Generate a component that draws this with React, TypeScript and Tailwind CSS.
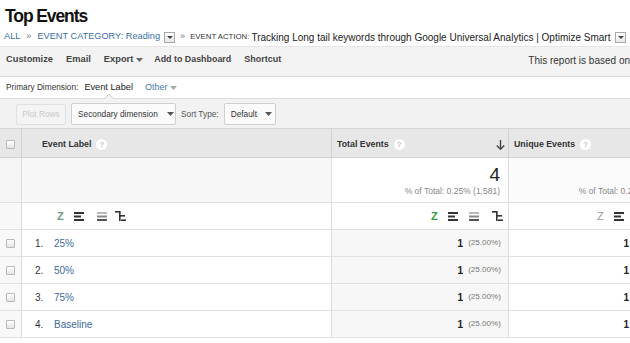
import React from "react";

const COLS = "grid grid-cols-[22px_310px_177px_165px] w-[674px]";

function Checkbox() {
  return (
    <div className="w-[9px] h-[9px] border border-[#b9b9b9] rounded-[1px] bg-gradient-to-b from-white to-[#e4e4e4]" />
  );
}

function Help() {
  return (
    <span className="inline-flex items-center justify-center w-[11px] h-[11px] rounded-full bg-white text-[#c4c4c4] text-[8px] font-bold leading-none">
      ?
    </span>
  );
}

function Caret({ color = "#555" }: { color?: string }) {
  return (
    <svg width="7" height="4" viewBox="0 0 7 4" className="inline-block">
      <path d="M0 0 L7 0 L3.5 4 Z" fill={color} />
    </svg>
  );
}

function SmallDrop() {
  return (
    <span className="inline-flex items-center justify-center w-[11px] h-[11px] border border-[#a9a9a9] bg-gradient-to-b from-white to-[#e8e8e8]">
      <svg width="6" height="3" viewBox="0 0 6 3">
        <path d="M0 0 L6 0 L3 3 Z" fill="#444" />
      </svg>
    </span>
  );
}

function IconZ({ cls }: { cls: string }) {
  return <span className={`text-[11px] leading-none w-[8px] ${cls}`}>Z</span>;
}

function IconE() {
  return (
    <svg width="10" height="9" viewBox="0 0 10 9">
      <rect x="0" y="0" width="10" height="2" fill="#333" />
      <rect x="0" y="3.5" width="7" height="2" fill="#333" />
      <rect x="0" y="7" width="10" height="2" fill="#333" />
    </svg>
  );
}

function IconBars() {
  return (
    <svg width="10" height="9" viewBox="0 0 10 9">
      <rect x="0" y="0" width="10" height="2" fill="#bbb" />
      <rect x="0" y="3.5" width="10" height="2" fill="#888" />
      <rect x="0" y="7" width="10" height="2" fill="#555" />
    </svg>
  );
}

function IconPivot() {
  return (
    <svg width="11" height="10" viewBox="0 0 11 10">
      <rect x="0" y="0" width="5" height="1.6" fill="#333" />
      <rect x="4" y="0" width="1.6" height="10" fill="#333" />
      <rect x="4" y="4" width="6" height="1.6" fill="#333" />
      <rect x="6" y="8.4" width="5" height="1.6" fill="#333" />
    </svg>
  );
}

function DownArrow() {
  return (
    <svg width="9" height="10" viewBox="0 0 9 10">
      <path d="M4.5 0 V9" stroke="#444" strokeWidth="1.4" />
      <path d="M0.8 5.5 L4.5 9.2 L8.2 5.5" stroke="#444" strokeWidth="1.4" fill="none" />
    </svg>
  );
}

function IconSet({ z }: { z: string }) {
  return (
    <>
      <IconZ cls={z} />
      <span className="ml-[9px] flex"><IconE /></span>
      <span className="ml-[11px] flex"><IconBars /></span>
      <span className="ml-[13px] flex"><IconPivot /></span>
    </>
  );
}

function TotalCell({ cls }: { cls: string }) {
  return (
    <div className={`${cls} flex flex-col items-end pt-[7px]`}>
      <span className="text-[19px] leading-[20px] text-[#222]">4</span>
      <span className="text-[8.5px] leading-[12px] text-[#888]">% of Total: 0.25% (1,581)</span>
    </div>
  );
}

const rows = [
  { n: "1.", label: "25%" },
  { n: "2.", label: "50%" },
  { n: "3.", label: "75%" },
  { n: "4.", label: "Baseline" },
];

export default function App() {
  return (
    <div className="w-[630px] h-[343px] overflow-hidden bg-white font-['Liberation_Sans',Arial,sans-serif] text-[#222]">
      {/* Title */}
      <div className="h-[28px] pl-[5px] pt-[6px]">
        <h1 className="text-[17.5px] leading-[20px] font-bold tracking-[-1.1px] text-[#111]">Top Events</h1>
      </div>

      {/* Breadcrumb */}
      <div className="h-[18px] pl-[4px] flex items-center text-[9.2px] whitespace-nowrap">
        <span className="text-[#3d6fa8]">ALL</span>
        <span className="text-[#777] mx-[6px]">»</span>
        <span className="text-[#3d6fa8]">EVENT CATEGORY: Reading</span>
        <span className="ml-[4px]"><SmallDrop /></span>
        <span className="text-[#777] mx-[5px]">»</span>
        <span className="text-[7.8px] text-[#333]">EVENT ACTION:</span>
        <span className="ml-[2px] text-[#222] text-[10px]">
          Tracking Long tail keywords through Google Universal Analytics | Optimize Smart
        </span>
        <span className="ml-[5px]"><SmallDrop /></span>
      </div>

      {/* Toolbar */}
      <div className="h-[30px] bg-[#f3f3f3] border-t border-[#e6e6e6] flex items-center pl-[6px] pb-[3px] text-[9.3px] font-bold text-[#444] whitespace-nowrap">
        <span>Customize</span>
        <span className="ml-[13px]">Email</span>
        <span className="ml-[13px] flex items-center gap-[3px]">Export <Caret color="#666" /></span>
        <span className="ml-[11px] text-[8.9px]">Add to Dashboard</span>
        <span className="ml-[13px] text-[9px]">Shortcut</span>
        <span className="ml-auto font-normal text-[10px] text-[#333]">This report is based on</span>
      </div>

      {/* Primary dimension */}
      <div className="h-[23px] border-t border-b border-[#dcdcdc] flex items-center pl-[6px] text-[8.3px] whitespace-nowrap">
        <span className="text-[#333]">Primary Dimension:</span>
        <span className="ml-[6px] text-[9.2px] text-[#222] relative">
          Event Label
          <svg width="10" height="5" viewBox="0 0 10 5" className="absolute left-[20px] top-[13px]">
            <path d="M0 5 L5 0 L10 5" fill="#f2f2f2" stroke="#cfcfcf" strokeWidth="1" />
          </svg>
        </span>
        <span className="ml-[12px] text-[9px] text-[#4a78ad] flex items-center gap-[3px]">
          Other <Caret color="#aaa" />
        </span>
      </div>

      {/* Controls */}
      <div className="h-[30px] bg-[#f2f2f2] border-b border-[#d4d4d4] flex items-center pl-[16px] pt-[1px] text-[8.3px] whitespace-nowrap">
        <div className="h-[21px] w-[50px] border border-[#e0e0e0] bg-[#f4f4f4] rounded-[2px] flex items-center justify-center text-[#c8c8c8]">
          Plot Rows
        </div>
        <div className="ml-[5px] h-[22px] w-[105px] border border-[#cfcfcf] bg-[#fbfbfb] rounded-[2px] flex items-center pl-[6px] text-[#333]">
          Secondary dimension
          <span className="ml-[9px] flex"><Caret color="#555" /></span>
        </div>
        <span className="ml-[5px] text-[#555]">Sort Type:</span>
        <div className="ml-[5px] h-[22px] w-[52px] border border-[#cfcfcf] bg-[#fbfbfb] rounded-[2px] flex items-center pl-[6px] text-[#333]">
          Default
          <span className="ml-[8px] flex"><Caret color="#555" /></span>
        </div>
      </div>

      {/* Table header */}
      <div className={`${COLS} h-[29px] bg-[#e7e7e7] border-b border-[#d2d2d2] text-[8.8px] font-bold text-[#333]`}>
        <div className="border-r border-[#d2d2d2] flex items-center justify-center pt-[2px]">
          <Checkbox />
        </div>
        <div className="border-r border-[#d2d2d2] flex items-center pl-[20px] pt-[3px] gap-[5px]">
          Event Label <Help />
        </div>
        <div className="border-r border-[#d2d2d2] flex items-center pl-[5px] pr-[3px] pt-[3px] gap-[5px]">
          Total Events <Help />
          <span className="ml-auto flex"><DownArrow /></span>
        </div>
        <div className="flex items-center pl-[5px] pt-[3px] gap-[5px]">
          Unique Events <Help />
        </div>
      </div>

      {/* Totals row */}
      <div className={`${COLS} h-[45px] border-b border-[#e0e0e0]`}>
        <div className="border-r border-[#dcdcdc] bg-[#f5f5f5]" />
        <div className="border-r border-[#dcdcdc] bg-[#f7f7f7]" />
        <TotalCell cls="border-r border-[#dcdcdc] bg-white pr-[8px]" />
        <TotalCell cls="bg-[#fbfbfb] pr-0" />
      </div>

      {/* Sparkline/icon row */}
      <div className={`${COLS} h-[27px] border-b border-[#e0e0e0]`}>
        <div className="border-r border-[#dcdcdc] bg-[#f8f8f8]" />
        <div className="border-r border-[#dcdcdc] flex items-center pl-[35px]">
          <IconZ cls="font-bold text-[#6f9b7a]" />
          <span className="ml-[9px] flex"><IconE /></span>
          <span className="ml-[13px] flex"><IconBars /></span>
          <span className="ml-[8px] flex"><IconPivot /></span>
        </div>
        <div className="border-r border-[#dcdcdc] flex items-center justify-end pr-[5px]">
          <IconSet z="font-bold text-[#3a9a3a]" />
        </div>
        <div className="flex items-center justify-end pr-[5px]">
          <IconSet z="text-[#999]" />
        </div>
      </div>

      {/* Data rows */}
      {rows.map((r) => (
        <div key={r.n} className={`${COLS} h-[27px] border-b border-[#e0e0e0] text-[10px]`}>
          <div className="border-r border-[#dcdcdc] bg-[#f8f8f8] flex items-center justify-center">
            <Checkbox />
          </div>
          <div className="border-r border-[#dcdcdc] bg-white flex items-center pl-[13px]">
            <span className="w-[19px] text-[#333]">{r.n}</span>
            <span className="text-[#3e6b9c]">{r.label}</span>
          </div>
          <div className="border-r border-[#dcdcdc] bg-[#f7f7f7] flex items-center justify-end pr-[7px] gap-[5px]">
            <span className="font-bold text-[#222]">1</span>
            <span className="text-[8.1px] text-[#777]">(25.00%)</span>
          </div>
          <div className="bg-white flex items-center justify-end pr-[7px] gap-[5px]">
            <span className="font-bold text-[#222]">1</span>
            <span className="text-[8.1px] text-[#777]">(25.00%)</span>
          </div>
        </div>
      ))}
    </div>
  );
}
